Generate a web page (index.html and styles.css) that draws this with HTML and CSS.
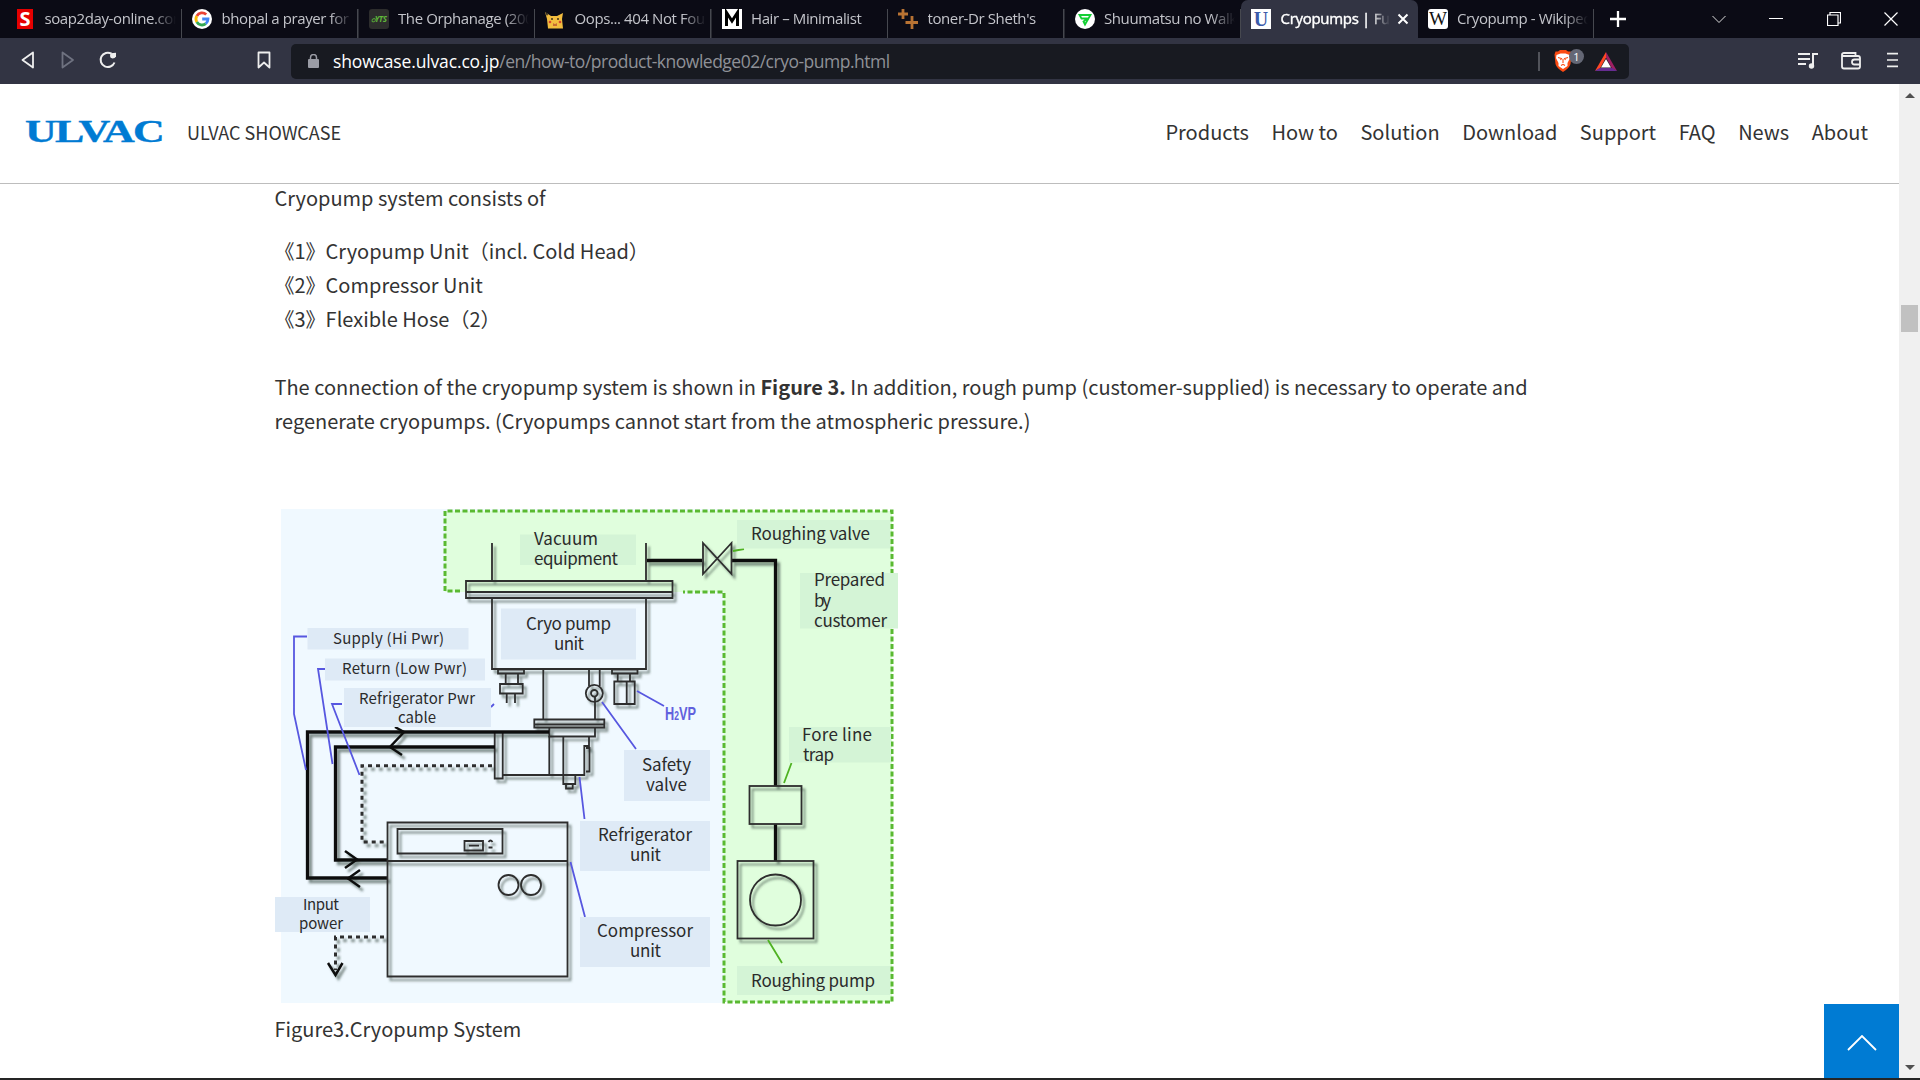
FILE: index.html
```html
<!DOCTYPE html>
<html lang="en">
<head>
<meta charset="utf-8">
<title>Cryopumps | Fundamentals</title>
<link rel="stylesheet" href="styles.css">
</head>
<body>
<div class="browser">
  <div class="tabstrip">
    <div class="tab tab-first">
      <svg class="fav" viewBox="0 0 20 20"><rect x="2" width="16" height="20" fill="#e50000"/><text x="10" y="17" font-size="20" font-weight="700" fill="#fff" text-anchor="middle">S</text></svg>
      <span class="label">soap2day-online.com</span>
    </div>
    <div class="tab">
      <svg class="fav" viewBox="0 0 20 20"><circle cx="10" cy="10" r="10" fill="#fff"/><g fill="none" stroke-width="2.8"><path d="M14.2 5.6A6 6 0 0 0 4.8 7" stroke="#ea4335"/><path d="M4.8 7a6 6 0 0 0 0 6" stroke="#fbbc05"/><path d="M4.8 13a6 6 0 0 0 9 1.6" stroke="#34a853"/><path d="M13.8 14.6A6 6 0 0 0 16 10H10.2" stroke="#4285f4"/></g></svg>
      <span class="label">bhopal a prayer for rain</span>
    </div>
    <div class="tab">
      <svg class="fav" viewBox="0 0 20 20"><rect width="20" height="20" rx="3" fill="#2d2d2d"/><text x="10" y="13" font-size="8" font-weight="700" font-style="italic" fill="#5fb83a" text-anchor="middle" textLength="16">ဝYTS</text></svg>
      <span class="label">The Orphanage (2007)</span>
    </div>
    <div class="tab">
      <svg class="fav" viewBox="0 0 20 20"><path d="M0 3l6 4h6l6-3-1 6 1 9.500H3L2 10z" fill="#f2bd3f"/><path d="M0 3l3 2-1 2z" fill="#222"/><circle cx="7" cy="10" r="1" fill="#40311a"/><circle cx="13" cy="10" r="1" fill="#40311a"/><circle cx="5" cy="13" r="1.300" fill="#d8452d"/><circle cx="15" cy="13" r="1.300" fill="#d8452d"/><path d="M8 14q2 2 4 0v3H8z" fill="#c66b32"/></svg>
      <span class="label">Oops... 404 Not Found</span>
    </div>
    <div class="tab">
      <svg class="fav" viewBox="0 0 20 20"><rect width="20" height="20" fill="#fff"/><path d="M4.500 17V3.500L10 12l5.500-8.500V17" fill="none" stroke="#000" stroke-width="3"/></svg>
      <span class="label">Hair – Minimalist</span>
    </div>
    <div class="tab">
      <svg class="fav" viewBox="0 0 20 20"><path d="M5 0v10M0 5h10M14 7v13M7.500 13.500H20" fill="none" stroke="#b87333" stroke-width="2.800"/></svg>
      <span class="label">toner-Dr Sheth's</span>
    </div>
    <div class="tab">
      <svg class="fav" viewBox="0 0 20 20"><circle cx="10" cy="10" r="10" fill="#fff"/><path d="M4.500 6h11l-5.500 9.500-1.500-3 4-3H6.500z" fill="none" stroke="#13cf33" stroke-width="1.800"/></svg>
      <span class="label">Shuumatsu no Walküre</span>
    </div>
    <div class="tab active">
      <svg class="fav" viewBox="0 0 20 20"><rect width="20" height="20" fill="#fff"/><text class="serif" x="10" y="17" font-size="20" font-weight="700" fill="#3b5ba9" text-anchor="middle">U</text></svg>
      <span class="label">Cryopumps | Fundamentals</span>
      <svg class="tab-close" viewBox="0 0 12 12"><path d="M1.500 1.500l9 9M10.500 1.500l-9 9" stroke="#fff" stroke-width="2"/></svg>
    </div>
    <div class="tab">
      <svg class="fav" viewBox="0 0 20 20"><rect width="20" height="20" rx="3" fill="#fff"/><text class="serif" x="10" y="16" font-size="18" fill="#111" text-anchor="middle" textLength="18" lengthAdjust="spacingAndGlyphs">W</text></svg>
      <span class="label">Cryopump - Wikipedia</span>
    </div>
    <svg class="newtab" viewBox="0 0 16 16"><path d="M8 0v16M0 8h16" stroke="#fff" stroke-width="2.300"/></svg>
    <div class="winctl">
      <svg viewBox="0 0 14 14"><path d="M.5 4L7 10.500 13.500 4" fill="none" stroke="#ddd"/></svg>
      <svg viewBox="0 0 14 14"><path d="M0 6.500h14" stroke="#fff"/></svg>
      <svg viewBox="0 0 14 14"><path d="M3 3V.5h10.500V11H11M.5 3h10.500v10.500H.5z" fill="none" stroke="#fff" stroke-width="1.200"/></svg>
      <svg viewBox="0 0 14 14"><path d="M.5.5l13 13M13.500.5l-13 13" stroke="#fff" stroke-width="1.200"/></svg>
    </div>
  </div>

  <div class="toolbar">
    <svg class="ic back" viewBox="0 0 20 20"><path d="M15 2.500L4.500 10 15 17.500z" fill="none" stroke="#eee" stroke-width="1.800" stroke-linejoin="round"/></svg>
    <svg class="ic fwd" viewBox="0 0 20 20"><path d="M4.500 2.500L15 10 4.500 17.500z" fill="none" stroke="#6f7280" stroke-width="1.800" stroke-linejoin="round"/></svg>
    <svg class="ic reload" viewBox="0 0 20 20"><path d="M16.500 12.500A7.200 7.200 0 1 1 13.500 3.700" fill="none" stroke="#eee" stroke-width="2"/><path d="M12.500 3.200L18 2.800v3.700q-1 2-3.500 2-2.500-.5-2.500-2.500z" fill="#eee"/></svg>
    <svg class="ic mark" viewBox="0 0 20 20"><path d="M4.500 2.500h11v15L10 12.500l-5.500 5z" fill="none" stroke="#eee" stroke-width="1.800" stroke-linejoin="round"/></svg>
    <div class="address">
      <svg class="lock" viewBox="0 0 11 14"><rect y="5" width="11" height="9" rx="1" fill="#9a9ca5"/><path d="M2.500 6V3.500a3 3 0 0 1 6 0V6" fill="none" stroke="#9a9ca5" stroke-width="1.500"/></svg>
      <span class="url"><b>showcase.ulvac.co.jp</b>/en/how-to/product-knowledge02/cryo-pump.html</span>
      <svg class="shields" viewBox="0 0 80 24">
        <path d="M1 3v19" stroke="#8a8c94"/>
        <path d="M20 2.500l2-1.500h6l2 1.500 2.500 0 1 3-1 9.500q-1 4-7.500 8-6.500-4-7.500-8l-1-9.500 1-3z" fill="#fb4b13"/>
        <path d="M18.500 6l4-1.500h5l4 1.500.5 3-2.500 5v3l-4.500 3-4.500-3v-3l-2.500-5z" fill="#fff"/>
        <path d="M20 8.500l3.500 1-1 1.500M30 8.500l-3.500 1 1 1.500M25 10v4M23 16.500l2-1.200 2 1.200" fill="none" stroke="#fb4b13" stroke-width="1.100"/>
        <rect x="31" width="15" height="15" rx="7.500" fill="#646775"/><text x="38.500" y="11.500" font-size="11" fill="#fff" text-anchor="middle">1</text>
        <path d="M68 3L57 22l5-2.500 6-11z" fill="#ff4724"/><path d="M68 3l11 19-5-2.500-6-11z" fill="#9e1f63"/><path d="M57 22h22l-4.500-3h-13z" fill="#662d91"/><path d="M68 10l-5 8.500h10z" fill="#fff"/>
      </svg>
    </div>
    <div class="tools">
      <svg viewBox="0 0 20 20"><path d="M0 4h12M0 9h12M0 14h8M15 15.500V4h5" fill="none" stroke="#eee" stroke-width="2"/><circle cx="13.500" cy="16" r="2.700" fill="#eee"/></svg>
      <svg viewBox="0 0 20 20"><path d="M1 4.500v12q0 2 2 2h14q2 0 2-2V8q0-2-2-2H3Q1 6 1 4.500q0-1.500 2-1.500h11.500v3" fill="none" stroke="#eee" stroke-width="1.800"/><path d="M19 9.500h-5.500q-2.500 0-2.500 2.500t2.500 2.500H19" fill="none" stroke="#eee" stroke-width="1.800"/></svg>
      <svg class="menu" viewBox="0 0 12 20"><path d="M0 3h12M0 10h12M0 17h12" stroke="#eee" stroke-width="1.800"/></svg>
    </div>
  </div>

  <div class="viewport">
    <div class="page">
      <header class="site-header">
        <svg class="logo" viewBox="0 0 138 24"><text class="serif wordmark" x="0" y="22" textLength="138" lengthAdjust="spacingAndGlyphs">ULVAC</text></svg>
        <span class="site-name">ULVAC SHOWCASE</span>
        <nav class="nav"><a>Products</a><a>How to</a><a>Solution</a><a>Download</a><a>Support</a><a>FAQ</a><a>News</a><a>About</a></nav>
      </header>
      <main class="content" lang="ja">
        <p class="intro">Cryopump system consists of</p>
        <ul class="parts">
          <li>《1》Cryopump Unit（incl. Cold Head）</li>
          <li>《2》Compressor Unit</li>
          <li>《3》Flexible Hose（2）</li>
        </ul>
        <p class="para">The connection of the cryopump system is shown in <strong>Figure 3.</strong> In addition, rough pump (customer-supplied) is necessary to operate and regenerate cryopumps. (Cryopumps cannot start from the atmospheric pressure.)</p>
        <figure class="figure">
          <svg class="diagram" viewBox="275 505 625 500" width="625" height="500">
            <defs>
              <filter id="shade" x="-5%" y="-5%" width="110%" height="110%"><feDropShadow dx="3" dy="3.500" stdDeviation="1.300" flood-color="#33443a" flood-opacity=".6"/></filter>
            </defs>
            <rect x="281" y="509" width="443" height="494" fill="#f0f9ff"/>
            <path d="M445 511H892V1002H724V592H445z" fill="#e0fedd"/>
            <path d="M460 591H445V511H892V1002H724V592H683" fill="none" stroke="#5ab932" stroke-width="3" stroke-dasharray="5 2.500"/>

            <g class="ink" filter="url(#shade)">
              <path d="M492 543V581M646 543V581M492 598V669H646V598"/>
              <path d="M466 581H672.500V598H466zM466 592H672.500"/>
              <path class="pipe" d="M647 560.500H702M732 560.500H775.500V786M775.500 824V861"/>
              <path d="M703 543L731.500 574V543L703 574z"/>
              <rect x="749.500" y="786" width="52" height="38"/>
              <rect x="737.500" y="861" width="76" height="77.500"/>
              <circle cx="775.500" cy="900" r="25.500"/>
              <path d="M498 669.500H524V673.500H498zM505.700 673.500V684M518 673.500V684M500 684H522.700V693.500H500zM506.700 694V703M515 694V703"/>
              <path d="M612 669.500H637.500V673.500H612zM617.700 673.500V681M630 673.500V681M614.300 681.500H634.700V704H614.300zM626.700 681.500V704"/>
              <path d="M543.300 669V719M589 669V686M599.700 669V686M595 697V719"/>
              <circle cx="594.300" cy="693.300" r="8.500"/><circle cx="594.300" cy="693.300" r="3.300"/>
              <path d="M534.300 719.500H604.300V727.500H534.300zM534.300 724.500H604.300M549.300 727.500V736.500H595V727.500"/>
              <path d="M494.700 733V778.500H502.700V733M502.700 775H584.300V746H589V736.500M549.300 736V775M563.300 737V784H575.300V775M566 784V788.500H572.700V784M586 748H589.500V771.500H586"/>
              <path class="pipe" d="M549 732H307.500V878H387M495 747H335.500V860H387"/>
              <path class="arrow" d="M395 727L404 732 390 747 402 755M345 851L357 859.500 345 868M360 870L348 878.500 360 887"/>
              <path class="dots" d="M492 765.700H362V842H387M384 937H335.500V970"/>
              <path class="arrow" d="M328 963L335.500 975 342.500 963"/>
              <path d="M387.500 822.500H567.500V976.500H387.500zM387.500 861H567.500"/>
              <path d="M397.500 829H502.500V853.500H397.500zM464.500 841H483V850.500H464.500zM469 845.700H479"/>
              <path d="M488.500 842Q490.500 839 492.500 842M488.500 847.500H492.500"/>
              <circle cx="508.500" cy="885" r="10"/><circle cx="531" cy="885" r="10"/>
            </g>

            <g class="lead-blue"><path d="M307 636.500H294V714L306 770M325 669H318L332.500 764M342 704H332L359.500 775M491 707L494 704M637 691L664 706M602 702L636 749M579.500 777L584.500 819M570.500 862L585 917"/></g>
            <g class="lead-green"><path d="M733 551L744 549M791.500 763L784 783M768 940L782 963"/></g>

            <g fill="#deeaf6">
              <rect x="307.500" y="628" width="161" height="21.500"/><rect x="325" y="658.500" width="160" height="22"/><rect x="344" y="688" width="147" height="39"/>
              <rect x="275" y="897" width="95" height="35"/><rect x="501" y="608.500" width="135" height="51"/><rect x="624" y="750" width="86" height="51"/>
              <rect x="580" y="821" width="130" height="50"/><rect x="580" y="917" width="130" height="50"/>
            </g>
            <g fill="#d4f4d6">
              <rect x="520" y="534.500" width="116" height="30.500"/><rect x="737" y="520" width="153" height="28.500"/><rect x="800" y="573" width="98" height="55.500"/>
              <rect x="789" y="727" width="102" height="35.500"/><rect x="737" y="966" width="153" height="29"/>
            </g>
            <g class="cap">
              <text x="534" y="545" textLength="64">Vacuum</text><text x="534" y="565" textLength="84">equipment</text>
              <text x="751" y="540" textLength="119">Roughing valve</text>
              <text x="814" y="586" textLength="71">Prepared</text><text x="814" y="607" textLength="17">by</text><text x="814" y="627" textLength="73">customer</text>
              <text x="526" y="630" textLength="85">Cryo pump</text><text x="554" y="650" textLength="30">unit</text>
              <text x="802" y="741" textLength="70">Fore line</text><text x="803" y="761" textLength="31">trap</text>
              <text x="642" y="771" textLength="49">Safety</text><text x="646" y="791" textLength="41">valve</text>
              <text x="598" y="841" textLength="94">Refrigerator</text><text x="630" y="861" textLength="31">unit</text>
              <text x="597" y="937" textLength="96">Compressor</text><text x="630" y="957" textLength="31">unit</text>
              <text x="751" y="987" textLength="124">Roughing pump</text>
            </g>
            <g class="cap small">
              <text x="333" y="643.500" textLength="111">Supply (Hi Pwr)</text><text x="342" y="673.500" textLength="125">Return (Low Pwr)</text>
              <text x="359" y="703.500" textLength="116">Refrigerator Pwr</text><text x="398" y="722.500" textLength="38">cable</text>
              <text x="303" y="909.500" textLength="36">Input</text><text x="299" y="928.500" textLength="44">power</text>
            </g>
            <text class="hvp" x="665" y="720" textLength="31" lengthAdjust="spacingAndGlyphs">H<tspan font-size="12">2</tspan>VP</text>
          </svg>
          <figcaption>Figure3.Cryopump System</figcaption>
        </figure>
      </main>
      <a class="to-top"><svg viewBox="0 0 30 16"><path d="M1 15L15 1l14 14" fill="none" stroke="#fff" stroke-width="1.800"/></svg></a>
    </div>
    <div class="scrollbar">
      <svg viewBox="0 0 10 5"><path d="M0 5L5 0l5 5z" fill="#505050"/></svg>
      <div class="thumb"></div>
      <svg viewBox="0 0 10 5"><path d="M0 0l5 5 5-5z" fill="#505050"/></svg>
    </div>
  </div>
</div>
</body>
</html>
```
FILE: styles.css
```css
* { box-sizing: border-box; }
body, p, ul, figure { margin: 0; padding: 0; }
body { background: #fff; overflow: hidden; }
svg { display: block; flex: none; }
.serif { font-family: "Liberation Serif", serif; }

.browser {
  width: 1920px;
  height: 1080px;
  display: flex;
  flex-direction: column;
  border-bottom: 2px solid #252525;
  font-family: "Open Sans", sans-serif;
}

/* Tab strip */
.tabstrip { height: 38px; flex: none; display: flex; background: #0b0b15; }
.tab {
  width: 176.5px;
  flex: none;
  display: flex;
  align-items: center;
  padding: 0 6px 0 10px;
  color: #c3c4ca;
  background: linear-gradient(#46484f, #46484f) right bottom / 1.500px 29px no-repeat;
}
.tab-first { width: 182px; padding-left: 15px; }
.fav { width: 20px; height: 20px; margin-right: 9.500px; overflow: visible; }
.label {
  flex: 1;
  min-width: 0;
  padding-bottom: 2px;
  overflow: hidden;
  white-space: nowrap;
  font-size: 15px;
  line-height: 22px;
  letter-spacing: -.4px;
  -webkit-mask-image: linear-gradient(90deg, #000 82%, transparent);
  mask-image: linear-gradient(90deg, #000 82%, transparent);
}
.tab.active { background: #323443; border-radius: 7px 7px 0 0; color: #fff; }
.active .label { -webkit-text-stroke: .4px #fff; letter-spacing: -.3px; }
.tab-close { width: 12px; height: 12px; margin: 0 3px 0 7px; }
.newtab { width: 16px; height: 16px; margin: 11px 0 0 16px; }
.winctl { margin: 12px 22px 0 auto; display: flex; gap: 43.500px; }
.winctl svg { width: 14px; height: 14px; }

/* Toolbar */
.toolbar { height: 46px; flex: none; display: flex; align-items: center; background: #323443; }
.ic { width: 20px; height: 20px; margin-top: -2px; }
.back { margin-left: 18px; }
.fwd { margin-left: 20px; }
.reload { margin-left: 20px; }
.mark { margin-left: 136px; }
.address {
  width: 1338px;
  height: 35px;
  margin-left: 17px;
  padding: 0 11px 0 17px;
  display: flex;
  align-items: center;
  border-radius: 5px;
  background: #181a21;
}
.lock { width: 11px; height: 14px; margin-right: 14px; }
.url { font-size: 17.500px; line-height: 24px; color: #8f9197; letter-spacing: -.5px; }
.url b { font-weight: 400; color: #fff; letter-spacing: -.15px; }
.shields { width: 80px; height: 24px; margin-left: auto; }
.tools { display: flex; margin: 0 22px 0 auto; gap: 22.500px; }
.tools svg { width: 20px; height: 20px; margin-top: -3px; }
.tools .menu { width: 11px; margin-left: 4px; }

/* Page */
.viewport { flex: 1; min-height: 0; display: flex; }
.page {
  width: 1899px;
  position: relative;
  font-family: "Noto Sans CJK JP", sans-serif;
  color: #333;
}
.site-header {
  height: 100px;
  display: flex;
  align-items: center;
  padding: 0 31px 4px 25px;
  border-bottom: 1px solid #bdbdbd;
}
.logo { width: 138px; height: 24px; margin-right: 24px; overflow: visible; }
.wordmark { font-size: 31px; font-weight: 700; letter-spacing: -1.200px; fill: #007bd3; stroke: #007bd3; stroke-width: .4; }
.site-name { font-size: 18px; }
.nav { margin-left: auto; display: flex; gap: 22.500px; font-size: 20px; }

.content { padding-left: 274.500px; font-size: 20px; line-height: 34px; }
.intro { margin-top: -3px; margin-bottom: 19px; }
.parts { list-style: none; margin-bottom: 34px; }
.para { width: 1270px; margin-bottom: 67px; }
.diagram { margin-bottom: 7px; }

.ink { fill: none; stroke: #2e2e2e; stroke-width: 1.800; }
.ink .pipe { stroke: #111; stroke-width: 3.300; }
.ink .arrow { stroke: #111; stroke-width: 2.500; }
.ink .dots { stroke-width: 3; stroke-dasharray: 4 4; }
.lead-blue { fill: none; stroke: #5757e0; stroke-width: 1.800; }
.lead-green { fill: none; stroke: #4fb222; stroke-width: 1.800; }
.cap { font-family: "Noto Sans CJK JP", sans-serif; font-size: 17px; fill: #2b2b2b; }
.small { font-size: 15px; }
.hvp { font-family: "Liberation Sans", sans-serif; font-weight: 700; font-size: 18px; fill: #6161dd; }

.to-top {
  position: absolute;
  right: 0;
  bottom: 0;
  width: 75px;
  height: 74px;
  display: flex;
  align-items: center;
  justify-content: center;
  background: #007bd3;
}
.to-top svg { width: 30px; height: 16px; margin-top: 3px; }

.scrollbar {
  width: 21px;
  padding: 9px 0 8px;
  display: flex;
  flex-direction: column;
  align-items: center;
  justify-content: space-between;
  background: #f0f0f0;
}
.scrollbar svg { width: 10px; height: 5px; }
.thumb { width: 17px; height: 27px; margin-top: 207px; margin-bottom: auto; background: #c1c1c1; }
```
